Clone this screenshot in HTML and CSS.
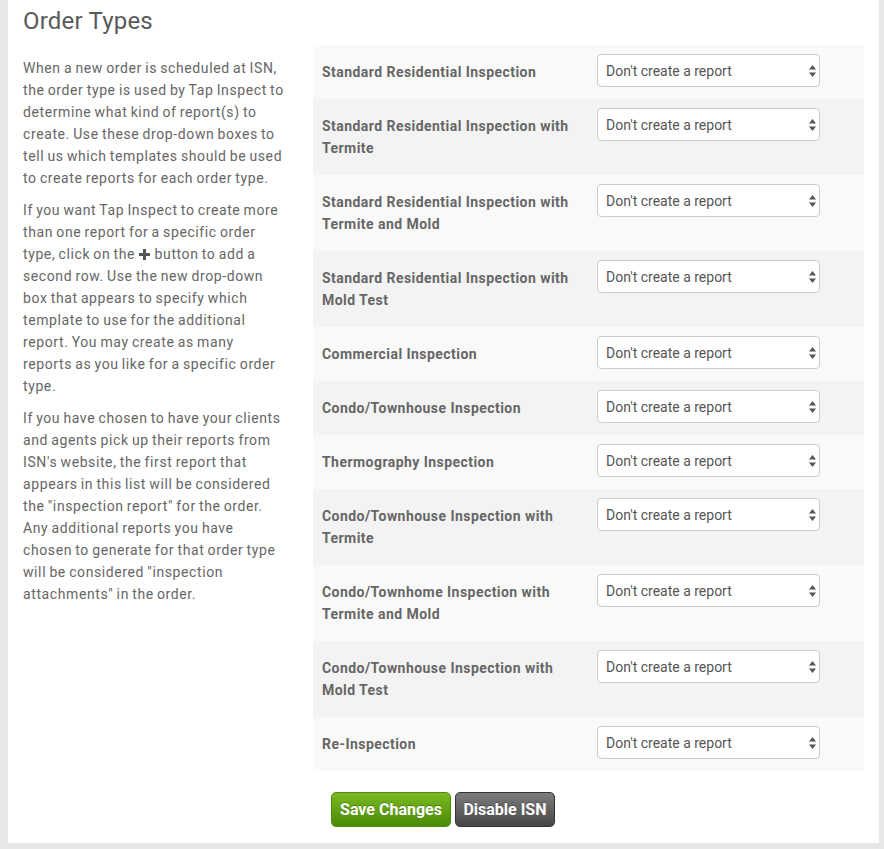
FILE: index.html
```html
<!DOCTYPE html>
<html lang="en">
<head>
    <meta charset="UTF-8">
    <meta name="viewport" content="width=device-width, initial-scale=1.0">
    <title>Order Types</title>
    <link rel="stylesheet" href="styles.css">
</head>
<body>
    <div class="page">
        <h2>Order Types</h2>
        <div class="layout">
            <div class="help">
                <p>When a new order is scheduled at ISN, the order type is used by Tap Inspect to determine what kind of report(s) to create. Use these drop-down boxes to tell us which templates should be used to create reports for each order type.</p>
                <p>If you want Tap Inspect to create more than one report for a specific order type, click on the <svg class="plus" width="11" height="11" viewBox="0 0 11 11"><path d="M4 0h3v4h4v3H7v4H4V7H0V4h4z" fill="#555"/></svg> button to add a second row. Use the new drop-down box that appears to specify which template to use for the additional report. You may create as many reports as you like for a specific order type.</p>
                <p>If you have chosen to have your clients and agents pick up their reports from ISN's website, the first report that appears in this list will be considered the "inspection report" for the order. Any additional reports you have chosen to generate for that order type will be considered "inspection attachments" in the order.</p>
            </div>
            <div class="main">
                <table id="orderTable">
                    <tbody>
                        <!-- rows are filled in by the script -->
                    </tbody>
                </table>
                <div class="actions">
                    <button class="btn btn-save">Save Changes</button>
                    <button class="btn btn-disable">Disable ISN</button>
                </div>
            </div>
        </div>
    </div>

    <script>
        const orderTypes = [
            "Standard Residential Inspection",
            "Standard Residential Inspection with Termite",
            "Standard Residential Inspection with Termite and Mold",
            "Standard Residential Inspection with Mold Test",
            "Commercial Inspection",
            "Condo/Townhouse Inspection",
            "Thermography Inspection",
            "Condo/Townhouse Inspection with Termite",
            "Condo/Townhome Inspection with Termite and Mold",
            "Condo/Townhouse Inspection with Mold Test",
            "Re-Inspection"
        ];

        const tableBody = document.getElementById("orderTable").getElementsByTagName("tbody")[0];

        orderTypes.forEach((name) => {
            let row = tableBody.insertRow();
            let label = row.insertCell(0);
            let pick = row.insertCell(1);
            label.className = "type-name";
            pick.className = "type-pick";
            label.innerHTML = name;
            pick.innerHTML = `
                <div class="select-wrap">
                    <select class="report-select">
                        <option>Don't create a report</option>
                    </select>
                    <svg class="arrows" width="7" height="12" viewBox="0 0 7 12">
                        <path d="M3.5 0L7 4.5H0z M3.5 12L0 7.5h7z" fill="#555"/>
                    </svg>
                </div>
            `;
        });
    </script>
</body>
</html>
```

FILE: styles.css
```css
body {
    margin: 0;
    background-color: #e7e7e7;
    font-family: Roboto, "Liberation Sans", Arial, sans-serif;
    color: #666;
}
.page {
    margin: 0 5px 7px 8px;
    padding: 0 15px 16px;
    background-color: #fff;
}
h2 {
    margin: 0;
    padding: 9px 0 11px;
    font-size: 24px;
    font-weight: 400;
    line-height: 25px;
    letter-spacing: 0.2px;
    color: #5a5a5a;
}
.layout {
    display: grid;
    grid-template-columns: 262px 1fr;
    column-gap: 28px;
}
.help {
    padding-top: 12px;
    font-size: 14px;
    line-height: 22px;
    letter-spacing: 0.6px;
    word-spacing: -0.8px;
}
.help p {
    margin: 0 0 10px;
}
.plus {
    margin: 0 1px;
    vertical-align: -1px;
}
table {
    width: 100%;
    border-collapse: collapse;
}
tr:nth-child(odd) {
    background-color: #f9f9f9;
}
tr:nth-child(even) {
    background-color: #f3f3f3;
}
.type-name {
    width: 258px;
    padding: 16px 9px;
    font-size: 14px;
    font-weight: 700;
    line-height: 22px;
    letter-spacing: 0.45px;
    color: #666;
    vertical-align: top;
}
.type-pick {
    padding: 9px 8px;
    vertical-align: top;
}
.select-wrap {
    position: relative;
    width: 223px;
}
.report-select {
    display: block;
    width: 223px;
    height: 33px;
    padding: 0 24px 0 8px;
    border: 1px solid #ccc;
    border-radius: 4px;
    background-color: #fff;
    font-family: Roboto, "Liberation Sans", Arial, sans-serif;
    font-size: 14px;
    color: #555;
    appearance: none;
    -webkit-appearance: none;
}
.arrows {
    position: absolute;
    right: 4px;
    top: 11px;
}
.actions {
    padding: 21px 0 0 18px;
}
.btn {
    height: 35px;
    padding: 0;
    border-radius: 5px;
    font-family: Roboto, "Liberation Sans", Arial, sans-serif;
    font-size: 16px;
    font-weight: 700;
    white-space: nowrap;
    color: #fff;
    text-shadow: 0 -1px 0 rgba(0, 0, 0, 0.25);
    cursor: pointer;
}
.btn-save {
    width: 120px;
    border: 1px solid #4d8a12;
    background: linear-gradient(#7bba22, #4a8a06);
}
.btn-disable {
    width: 100px;
    border: 1px solid #333;
    background: linear-gradient(#7c7c7c, #474747);
}
```
